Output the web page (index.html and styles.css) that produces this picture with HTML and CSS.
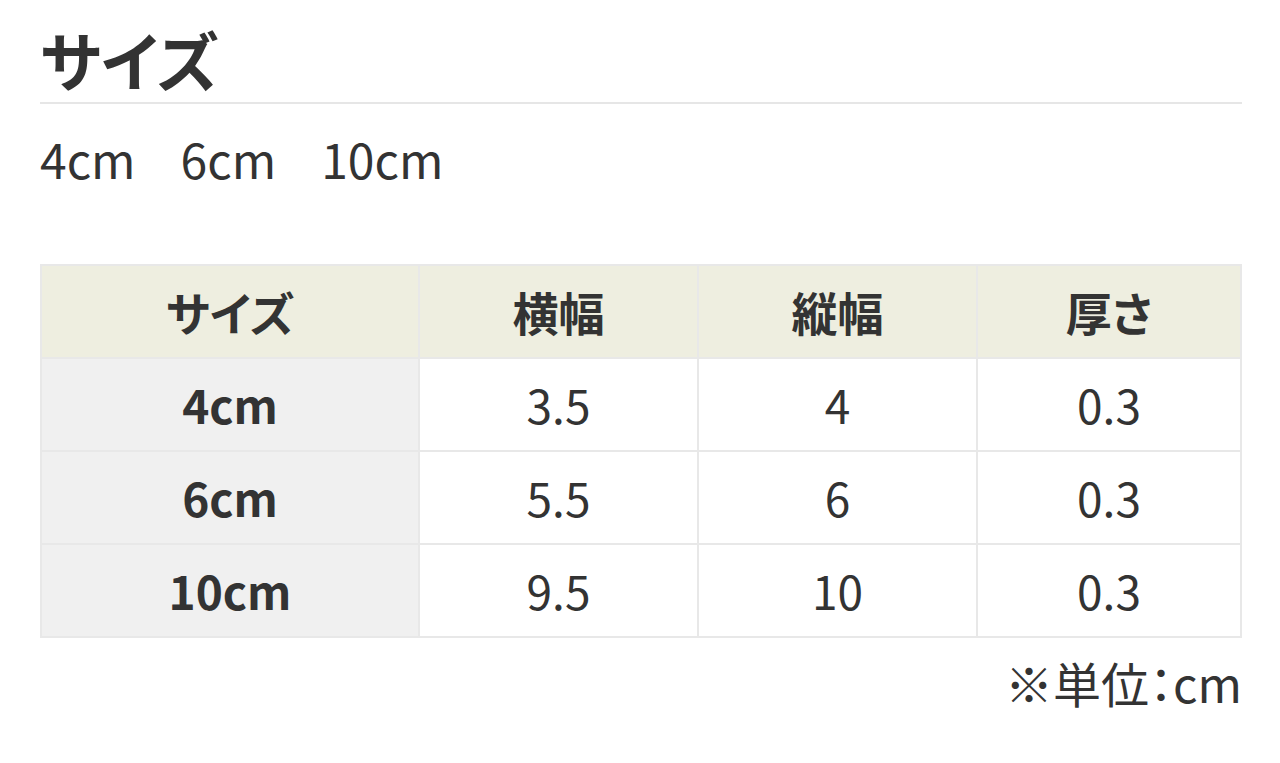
FILE: index.html
```html
<!DOCTYPE html>
<html lang="ja">
<head>
<meta charset="utf-8">
<link rel="stylesheet" href="styles.css">
</head>
<body>
<section class="size">
  <h2 class="size-title">サイズ</h2>
  <p class="size-list"><span>4cm</span><span>6cm</span><span>10cm</span></p>
  <table class="size-table">
    <thead>
      <tr><th class="c1">サイズ</th><th class="c2">横幅</th><th class="c3">縦幅</th><th class="c4">厚さ</th></tr>
    </thead>
    <tbody>
      <tr><th>4cm</th><td>3.5</td><td>4</td><td>0.3</td></tr>
      <tr><th>6cm</th><td>5.5</td><td>6</td><td>0.3</td></tr>
      <tr><th>10cm</th><td>9.5</td><td>10</td><td>0.3</td></tr>
    </tbody>
  </table>
  <p class="size-note">※単位：cm</p>
</section>
</body>
</html>
```
FILE: styles.css
```css
html, body {
  margin: 0;
  padding: 0;
  background: #fff;
}
body {
  font-family: "Noto Sans CJK JP", "Noto Sans", sans-serif;
  color: #333;
  font-feature-settings: "palt";
}
.size {
  padding: 17px 38px 0 40px;
}
.size-title {
  margin: 0;
  font-size: 64px;
  font-weight: 700;
  line-height: 82px;
  padding-bottom: 3px;
  border-bottom: 2px solid #e6e6e6;
}
.size-list {
  display: flex;
  gap: 45px;
  margin: 22px 0 0;
  font-size: 48px;
  line-height: 64px;
}
.size-table {
  margin-top: 74px;
  width: 100%;
  border-collapse: collapse;
  table-layout: fixed;
  font-size: 46px;
}
.size-table th,
.size-table td {
  border: 2px solid #e8e8e8;
  height: 91px;
  padding: 0;
  text-align: center;
  vertical-align: middle;
  line-height: 1.2;
}
.size-table thead th {
  background: #eeeee0;
  font-weight: 700;
}
.size-table tbody th {
  background: #f0f0f0;
  font-weight: 700;
}
.size-table td {
  font-weight: 400;
}
.c1 { width: 376px; }
.c2 { width: 277px; }
.c3 { width: 277px; }
.c4 { width: auto; }
.size-note {
  margin: 12px 0 0;
  text-align: right;
  font-size: 48px;
  line-height: 64px;
}
```
